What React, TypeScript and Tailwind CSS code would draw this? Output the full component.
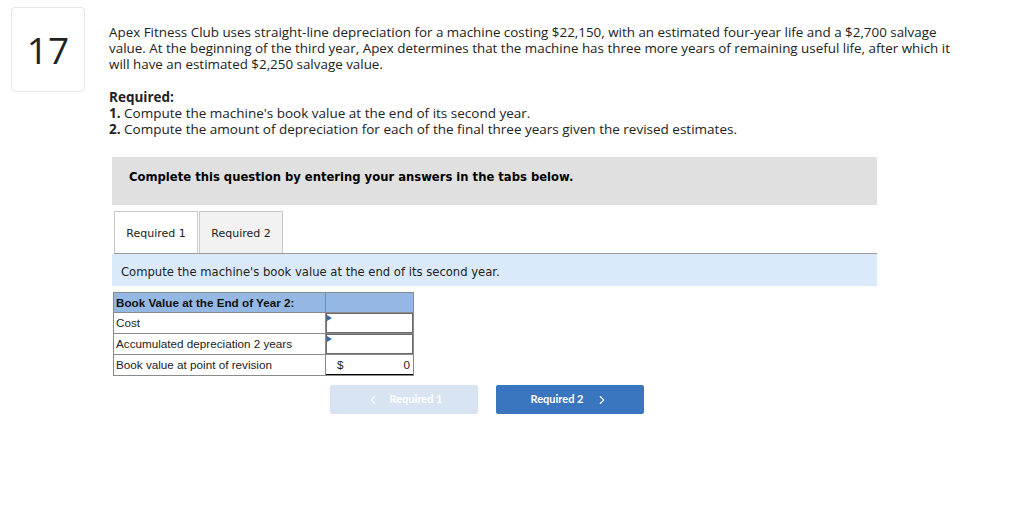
import { ChevronLeft, ChevronRight } from "lucide-react";

const rows = [
  { label: "Cost", kind: "input" },
  { label: "Accumulated depreciation 2 years", kind: "input" },
  { label: "Book value at point of revision", kind: "total" },
];

function InputCell() {
  return (
    <div className="relative h-[20px] border border-[#6b6b6b] bg-white">
      <span className="absolute left-0 top-[1px] w-0 h-0 border-y-[3px] border-y-transparent border-l-[5px] border-l-[#2f6eb5]" />
    </div>
  );
}

export default function App() {
  return (
    <div className="w-[1024px] h-[518px] bg-white flex items-start pt-[7px] pl-[11px] text-[#222]">
      {/* question number */}
      <div className="w-[74px] h-[85px] border border-[#e6e6e6] rounded-[4px] flex items-center justify-center shrink-0">
        <span className="text-[37px] leading-none text-[#222] font-['Open_Sans',sans-serif]">17</span>
      </div>

      <div className="ml-[24px] pt-[17px] w-[850px]">
        <p className="text-[13.4px] leading-[16px] font-['Open_Sans',sans-serif] text-[#222]">
          Apex Fitness Club uses straight-line depreciation for a machine costing $22,150, with an estimated four-year life and a $2,700 salvage value. At the beginning of the third year, Apex determines that the machine has three more years of remaining useful life, after which it will have an estimated $2,250 salvage value.
        </p>

        <div className="mt-[17px] text-[13.5px] leading-[16px] font-['Open_Sans',sans-serif]">
          <p className="font-bold">Required:</p>
          <p>
            <span className="font-bold">1.</span> Compute the machine's book value at the end of its second year.
          </p>
          <p>
            <span className="font-bold">2.</span> Compute the amount of depreciation for each of the final three years given the revised estimates.
          </p>
        </div>

        {/* instructions banner */}
        <div className="mt-[20px] ml-[3px] w-[765px] h-[48px] bg-[#e0e0e0] flex items-center pl-[17px] pb-[6px]">
          <span className="text-[11.6px] font-bold font-['DejaVu_Sans',Verdana,sans-serif] text-black">
            Complete this question by entering your answers in the tabs below.
          </span>
        </div>

        {/* tabs */}
        <div className="ml-[5px] mt-[7px] w-[763px] flex items-end border-b border-[#9a9a9a] h-[42px] font-['DejaVu_Sans',Verdana,sans-serif] text-[11px]">
          <div className="h-[42px] w-[84px] border border-[#c9c9c9] border-b-0 bg-white flex items-center justify-center pt-[3px] text-[#222]">
            Required 1
          </div>
          <div className="ml-[1px] h-[42px] w-[84px] border border-[#c9c9c9] border-b-0 bg-[#f2f2f2] flex items-center justify-center pt-[3px] text-[#222]">
            Required 2
          </div>
        </div>
        <div className="ml-[3px] w-[765px] h-[32px] bg-[#dbeafa] flex items-center pl-[9px] pt-[5px]">
          <span className="text-[11.6px] font-['DejaVu_Sans',Verdana,sans-serif] text-[#222]">
            Compute the machine's book value at the end of its second year.
          </span>
        </div>

        {/* book value table */}
        <div className="ml-[4px] mt-[6px] w-[301px] font-['Liberation_Sans',Arial,sans-serif] text-[11.7px] text-[#222]">
          <div className="flex h-[21px] bg-[#94b8e3] border border-[#8a8a8a]">
            <div className="w-[212px] border-r border-[#8a8a8a] flex items-center pl-[2px] font-bold text-[#111]">
              Book Value at the End of Year 2:
            </div>
            <div className="flex-1" />
          </div>
          {rows.map((r) => (
            <div
              key={r.label}
              className="flex h-[21px] border-x border-b border-[#8a8a8a]"
            >
              <div className="w-[212px] border-r border-[#8a8a8a] flex items-center pl-[2px]">
                {r.label}
              </div>
              <div className="flex-1 flex items-center">
                {r.kind === "input" ? (
                  <div className="w-full">
                    <InputCell />
                  </div>
                ) : (
                  <div className="w-full h-full flex items-center justify-between pl-[11px] pr-[3px] border-b border-black">
                    <span>$</span>
                    <span>0</span>
                  </div>
                )}
              </div>
            </div>
          ))}
        </div>

        {/* navigation */}
        <div className="flex mt-[9px] ml-[221px] gap-[18px] font-['Lato',sans-serif] text-[11px] font-bold">
          <button className="w-[148px] h-[29px] rounded-[2px] bg-[#d9e4f2] text-white flex items-center justify-center gap-[10px]">
            <ChevronLeft className="w-[14px] h-[14px]" strokeWidth={2} />
            Required 1
          </button>
          <button className="w-[148px] h-[29px] rounded-[2px] bg-[#3a76bf] text-white flex items-center justify-center gap-[12px]">
            Required 2
            <ChevronRight className="w-[14px] h-[14px]" strokeWidth={2} />
          </button>
        </div>
      </div>
    </div>
  );
}
